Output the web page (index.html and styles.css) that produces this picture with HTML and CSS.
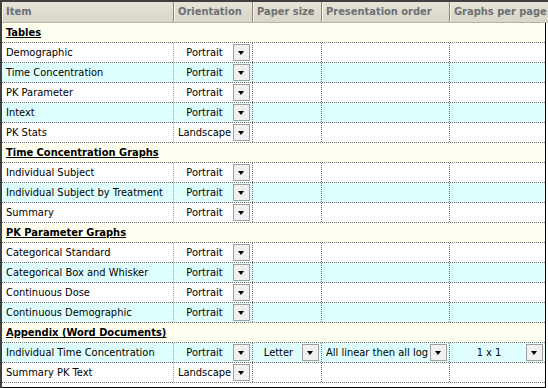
FILE: index.html
```html
<!DOCTYPE html>
<html>
<head>
<meta charset="utf-8">
<link rel="stylesheet" href="styles.css">
</head>
<body>
<div class="grid">
  <div class="head">
    <div class="hc c1">Item</div>
    <div class="hc c2">Orientation</div>
    <div class="hc c3">Paper size</div>
    <div class="hc c4">Presentation order</div>
    <div class="hc c5">Graphs per page</div>
  </div>
  <div class="body">
    <div class="sec"><span>Tables</span></div>
    <div class="row w"><div class="cell item">Demographic</div><div class="cell dd"><span class="v">Portrait</span><span class="btn"></span></div><div class="cell"></div><div class="cell"></div><div class="cell last"></div></div>
    <div class="row c"><div class="cell item">Time Concentration</div><div class="cell dd"><span class="v">Portrait</span><span class="btn"></span></div><div class="cell"></div><div class="cell"></div><div class="cell last"></div></div>
    <div class="row w"><div class="cell item">PK Parameter</div><div class="cell dd"><span class="v">Portrait</span><span class="btn"></span></div><div class="cell"></div><div class="cell"></div><div class="cell last"></div></div>
    <div class="row c"><div class="cell item">Intext</div><div class="cell dd"><span class="v">Portrait</span><span class="btn"></span></div><div class="cell"></div><div class="cell"></div><div class="cell last"></div></div>
    <div class="row w"><div class="cell item">PK Stats</div><div class="cell dd"><span class="v">Landscape</span><span class="btn"></span></div><div class="cell"></div><div class="cell"></div><div class="cell last"></div></div>
    <div class="sec"><span>Time Concentration Graphs</span></div>
    <div class="row w"><div class="cell item">Individual Subject</div><div class="cell dd"><span class="v">Portrait</span><span class="btn"></span></div><div class="cell"></div><div class="cell"></div><div class="cell last"></div></div>
    <div class="row c"><div class="cell item">Individual Subject by Treatment</div><div class="cell dd"><span class="v">Portrait</span><span class="btn"></span></div><div class="cell"></div><div class="cell"></div><div class="cell last"></div></div>
    <div class="row w"><div class="cell item">Summary</div><div class="cell dd"><span class="v">Portrait</span><span class="btn"></span></div><div class="cell"></div><div class="cell"></div><div class="cell last"></div></div>
    <div class="sec"><span>PK Parameter Graphs</span></div>
    <div class="row w"><div class="cell item">Categorical Standard</div><div class="cell dd"><span class="v">Portrait</span><span class="btn"></span></div><div class="cell"></div><div class="cell"></div><div class="cell last"></div></div>
    <div class="row c"><div class="cell item">Categorical Box and Whisker</div><div class="cell dd"><span class="v">Portrait</span><span class="btn"></span></div><div class="cell"></div><div class="cell"></div><div class="cell last"></div></div>
    <div class="row w"><div class="cell item">Continuous Dose</div><div class="cell dd"><span class="v">Portrait</span><span class="btn"></span></div><div class="cell"></div><div class="cell"></div><div class="cell last"></div></div>
    <div class="row c"><div class="cell item">Continuous Demographic</div><div class="cell dd"><span class="v">Portrait</span><span class="btn"></span></div><div class="cell"></div><div class="cell"></div><div class="cell last"></div></div>
    <div class="sec"><span>Appendix (Word Documents)</span></div>
    <div class="row c"><div class="cell item">Individual Time Concentration</div><div class="cell dd"><span class="v">Portrait</span><span class="btn"></span></div><div class="cell dd"><span class="v">Letter</span><span class="btn"></span></div><div class="cell dd"><span class="v">All linear then all log</span><span class="btn"></span></div><div class="cell dd last"><span class="v">1 x 1</span><span class="btn"></span></div></div>
    <div class="row w"><div class="cell item">Summary PK Text</div><div class="cell dd"><span class="v">Landscape</span><span class="btn"></span></div><div class="cell"></div><div class="cell"></div><div class="cell last"></div></div>
  </div>
</div>
</body>
</html>
```
FILE: styles.css
```css
html, body {
  margin: 0;
  padding: 0;
  background: #ffffff;
}
.grid {
  width: 548px;
  height: 388px;
  box-sizing: border-box;
  overflow: hidden;
  border-top: 2px solid #404040;
  border-left: 2px solid #404040;
  font-family: "DejaVu Sans Condensed", "Liberation Sans", sans-serif;
  font-size: 11px;
  color: #000;
}
.head {
  display: flex;
  height: 20px;
  width: 580px;
  background: linear-gradient(#e6e3d8, #d8d4c6);
  border-bottom: 1px solid #b8b4a4;
}
.hc {
  box-sizing: border-box;
  height: 20px;
  line-height: 20px;
  padding-left: 4px;
  font-weight: bold;
  color: #6c7074;
  white-space: nowrap;
  overflow: hidden;
  border-right: 1px solid #8a8778;
  box-shadow: inset 1px 0 0 #f8f6ee;
}
.c1 { width: 172px; }
.c2 { width: 79px; }
.c3 { width: 69px; }
.c4 { width: 128px; }
.c5 { width: 132px; border-right: none; }
.body {
  width: 544px;
  height: 365px;
  box-sizing: border-box;
  border-right: 1px solid #000;
  border-bottom: 1px solid #000;
  background: #fff;
}
.sec {
  height: 20px;
  box-sizing: border-box;
  border-bottom: 1px dotted #707070;
  background: #fffff0;
  padding-left: 4px;
  line-height: 19px;
  font-weight: bold;
}
.sec span {
  text-decoration: underline;
}
.row {
  display: grid;
  grid-template-columns: 172px 79px 69px 128px 1fr;
  height: 20px;
  box-sizing: border-box;
  border-bottom: 1px dotted #707070;
}
.row.c { background: #dfffff; }
.row.w { background: #ffffff; }
.cell {
  box-sizing: border-box;
  border-right: 1px dotted #707070;
  line-height: 19px;
  white-space: nowrap;
  overflow: hidden;
}
.cell.last { border-right: none; }
.cell.item {
  padding-left: 4px;
  border-right: 1px dotted #8ea6c8;
}
.dd {
  display: flex;
  align-items: flex-start;
}
.dd .v {
  flex: 1;
  text-align: center;
  padding-left: 2px;
}
.btn {
  width: 17px;
  height: 17px;
  box-sizing: border-box;
  margin-top: 1px;
  margin-right: 2px;
  border: 1px solid #a0a0a0;
  background: #f0f0f0;
  position: relative;
  flex: none;
}
.btn::after {
  content: "";
  position: absolute;
  left: 4px;
  top: 6px;
  border-left: 3.5px solid transparent;
  border-right: 3.5px solid transparent;
  border-top: 4px solid #000;
}
```
